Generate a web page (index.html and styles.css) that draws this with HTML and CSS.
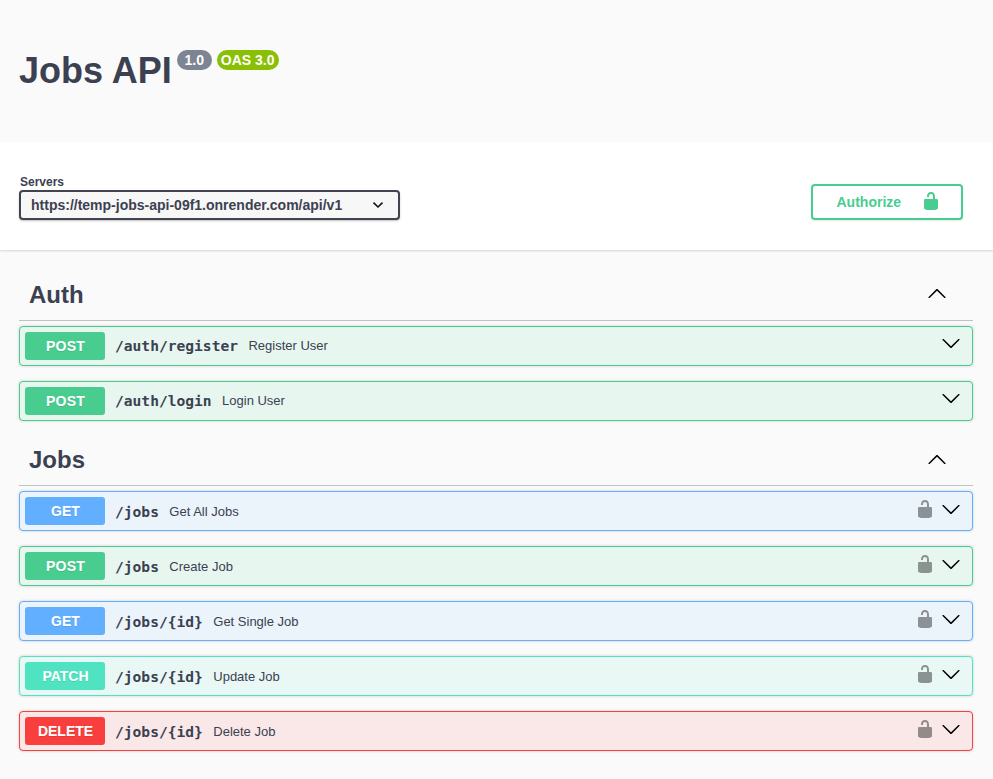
FILE: index.html
```html
<!DOCTYPE html>
<html lang="en">
<head>
<meta charset="utf-8">
<title>Jobs API</title>
<link rel="stylesheet" href="styles.css">
</head>
<body>
<svg class="defs" width="0" height="0" aria-hidden="true">
  <symbol id="unlocked" viewBox="0 0 20 20"><path d="M15.8 8H14V5.6C14 2.703 12.665 1 10 1 7.334 1 6 2.703 6 5.6V6h2v-.801C8 3.754 8.797 3 10 3c1.203 0 2 .754 2 2.199V8H4c-.553 0-1 .646-1 1.199V17c0 .549.428 1.139.951 1.307l1.197.387C5.672 18.861 6.55 19 7.1 19h5.8c.549 0 1.428-.139 1.951-.307l1.196-.387c.524-.167.953-.757.953-1.306V9.199C17 8.646 16.352 8 15.8 8z"/></symbol>
  <symbol id="down" viewBox="0 0 20 20"><path d="M17.418 6.109c.272-.268.709-.268.979 0s.271.701 0 .969l-7.908 7.83c-.27.268-.707.268-.979 0l-7.908-7.83c-.27-.268-.27-.701 0-.969.271-.268.709-.268.979 0L10 13.25l7.418-7.141z"/></symbol>
  <symbol id="up" viewBox="0 0 20 20"><path d="M17.418 14.908c.272.268.709.268.979 0s.271-.701 0-.969l-7.908-7.83c-.27-.268-.707-.268-.979 0l-7.908 7.83c-.27.268-.27.701 0 .969.271.268.709.268.979 0L10 7.767l7.418 7.141z"/></symbol>
</svg>
<header class="info">
  <h1 class="title">Jobs API</h1>
  <span class="badge version">1.0</span>
  <span class="badge oas">OAS 3.0</span>
</header>
<section class="scheme">
  <div class="servers">
    <span class="servers-label">Servers</span>
    <div class="select"><span>https://temp-jobs-api-09f1.onrender.com/api/v1</span><svg class="caret" viewBox="0 0 12 8"><path d="M1.5 1.7 6 6l4.5-4.3"/></svg></div>
  </div>
  <button class="authorize"><span>Authorize</span><svg class="icon"><use href="#unlocked"/></svg></button>
</section>
<main class="operations">
  <section class="tag auth">
    <h2 class="tag-head"><span>Auth</span><svg class="icon"><use href="#up"/></svg></h2>
    <div class="op post"><span class="method">POST</span><span class="path">/auth/register</span><span class="summary">Register User</span><svg class="icon arrow"><use href="#down"/></svg></div>
    <div class="op post"><span class="method">POST</span><span class="path">/auth/login</span><span class="summary">Login User</span><svg class="icon arrow"><use href="#down"/></svg></div>
  </section>
  <section class="tag jobs">
    <h2 class="tag-head"><span>Jobs</span><svg class="icon"><use href="#up"/></svg></h2>
    <div class="op get"><span class="method">GET</span><span class="path">/jobs</span><span class="summary">Get All Jobs</span><svg class="icon lock"><use href="#unlocked"/></svg><svg class="icon arrow"><use href="#down"/></svg></div>
    <div class="op post"><span class="method">POST</span><span class="path">/jobs</span><span class="summary">Create Job</span><svg class="icon lock"><use href="#unlocked"/></svg><svg class="icon arrow"><use href="#down"/></svg></div>
    <div class="op get"><span class="method">GET</span><span class="path">/jobs/{id}</span><span class="summary">Get Single Job</span><svg class="icon lock"><use href="#unlocked"/></svg><svg class="icon arrow"><use href="#down"/></svg></div>
    <div class="op patch"><span class="method">PATCH</span><span class="path">/jobs/{id}</span><span class="summary">Update Job</span><svg class="icon lock"><use href="#unlocked"/></svg><svg class="icon arrow"><use href="#down"/></svg></div>
    <div class="op delete"><span class="method">DELETE</span><span class="path">/jobs/{id}</span><span class="summary">Delete Job</span><svg class="icon lock"><use href="#unlocked"/></svg><svg class="icon arrow"><use href="#down"/></svg></div>
  </section>
</main>
</body>
</html>
```
FILE: styles.css
```css
* { box-sizing: border-box; }
body {
  margin: 0;
  height: 779px;
  overflow: hidden;
  background: #fafafa;
  color: #3b4151;
  font-family: "Liberation Sans", Arial, sans-serif;
}
.defs { display: none; }
.icon { width: 20px; height: 20px; flex: none; display: block; }

.info {
  height: 142px;
  padding: 50px 20px 0 19px;
  display: flex;
  align-items: flex-start;
}
.title { margin: 0 5px 0 0; font-size: 36px; line-height: 41px; white-space: nowrap; }
.badge {
  height: 20px;
  margin-right: 5px;
  border-radius: 10px;
  color: #fff;
  font-size: 14px;
  font-weight: 700;
  line-height: 20px;
  text-align: center;
  white-space: nowrap;
}
.version { width: 35px; background: #7d8492; }
.oas { width: 62px; background: #89bf04; }

.scheme {
  height: 108px;
  padding: 34px 30px 0 19px;
  display: flex;
  justify-content: space-between;
  align-items: flex-start;
  background: #fff;
  box-shadow: 0 1px 2px rgba(0, 0, 0, .15);
}
.servers-label { display: block; height: 14px; padding-left: 1px; font-size: 12px; font-weight: 700; line-height: 13px; }
.select {
  width: 381px;
  height: 30px;
  padding: 0 14px 0 10px;
  display: flex;
  align-items: center;
  justify-content: space-between;
  border: 2px solid #41444e;
  border-radius: 4px;
  background: #f7f7f7;
  box-shadow: 0 1px 2px rgba(0, 0, 0, .25);
  font-size: 14px;
  font-weight: 700;
}
.caret { width: 12px; height: 8px; fill: none; stroke: #111; stroke-width: 1.6; }
.authorize {
  width: 152px;
  height: 36px;
  margin-top: 8px;
  padding: 0 20px 0 23.5px;
  display: flex;
  justify-content: space-between;
  align-items: center;
  border: 2px solid #49cc90;
  border-radius: 4px;
  background: #fff;
  box-shadow: 0 1px 2px rgba(0, 0, 0, .1);
  color: #49cc90;
  font: 700 14px "Liberation Sans", Arial, sans-serif;
}
.authorize .icon { fill: #49cc90; margin-top: -2px; }

.operations { padding: 20px 20px 0 19px; }
.tag-head {
  height: 51px;
  margin: 0 0 5px;
  padding: 0 26px 0 10px;
  display: flex;
  align-items: center;
  justify-content: space-between;
  border-bottom: 1px solid rgba(59, 65, 81, .3);
  font-size: 24px;
  line-height: 28px;
}
.tag-head .icon { margin-top: -5px; }
.jobs { margin-top: -1px; }
.jobs .tag-head .icon { margin-top: -3px; }

.op {
  height: 40px;
  margin-bottom: 15px;
  padding: 0 11px 0 5px;
  display: flex;
  align-items: center;
  border: 1px solid;
  border-radius: 4px;
  box-shadow: 0 0 3px rgba(0, 0, 0, .19);
}
.method {
  width: 80px;
  height: 28px;
  padding-left: 1px;
  border-radius: 3px;
  color: #fff;
  font-size: 14px;
  font-weight: 700;
  line-height: 28px;
  text-align: center;
  text-shadow: 0 1px 0 rgba(0, 0, 0, .1);
}
.post .method { letter-spacing: .2px; }
.path {
  margin: 2px 10px 0;
  font: 700 14.6px/20px "DejaVu Sans Mono", monospace;
}
.summary { margin-right: auto; padding-left: .4px; font-size: 13px; line-height: 18px; }
.op .icon { margin-top: -4px; }
.auth .op .icon { margin-top: -6px; }
.auth .path { margin-top: 0; }
.jobs .summary { margin-top: 2px; }
.lock { margin-right: 6px; opacity: .4; }

.post { border-color: #49cc90; background: #e8f6f0; }
.post .method { background: #49cc90; }
.get { border-color: #61affe; background: #ebf3fb; }
.get .method { background: #61affe; }
.patch { border-color: #50e3c2; background: #e9f7f5; }
.patch .method { background: #50e3c2; }
.delete { border-color: #f93e3e; background: #fae7e7; }
.delete .method { background: #f93e3e; }
```
